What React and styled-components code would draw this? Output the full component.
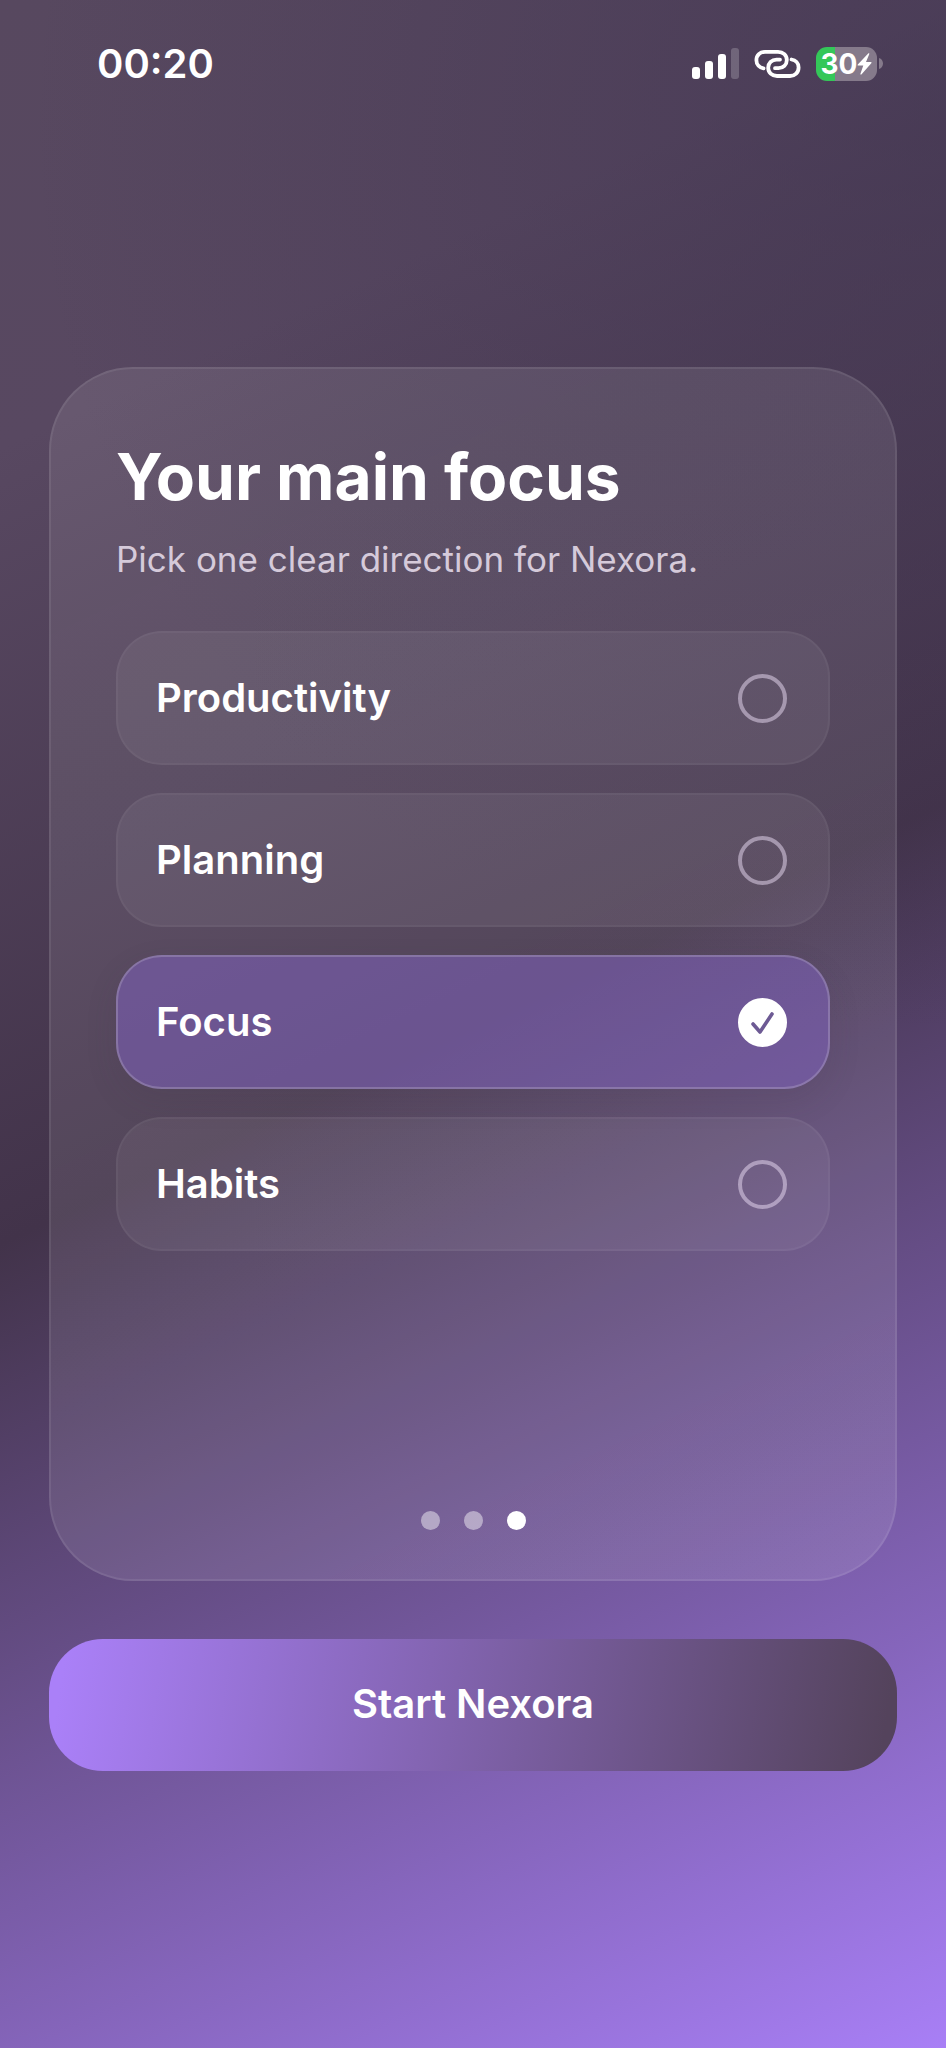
import React, { useState } from "react";
import styled, { createGlobalStyle } from "styled-components";

const GlobalStyle = createGlobalStyle`
    * {
        box-sizing: border-box;
    }

    body {
        margin: 0;
        font-family: Inter, "Liberation Sans", sans-serif;
        color: #fff;
        background: #42344a;
    }
`;

const Screen = styled.div`
    display: flex;
    flex-direction: column;
    min-height: 100vh;
    padding: 0 49px 277px;
    background:
        radial-gradient(circle at 100% 12%, rgba(64, 52, 80, 0.6), rgba(64, 52, 80, 0) 70%) no-repeat 0 0 / 100% 50%,
        linear-gradient(155deg, #57485f 0%, #584861 18%, #42334a 50%, #a87ff6 100%);
`;

const StatusBar = styled.header`
    display: flex;
    align-items: center;
    justify-content: space-between;
    height: 96px;
    margin-bottom: 271px;
    padding: 31px 14px 0 48px;
`;

const Time = styled.time`
    font-size: 40px;
    line-height: 48px;
    font-weight: 600;
`;

const StatusIcons = styled.div`
    display: flex;
    align-items: center;
    gap: 15px;
`;

const Battery = styled.div`
    display: flex;
    align-items: center;
    gap: 2px;
`;

const BatteryBody = styled.div`
    display: flex;
    align-items: center;
    justify-content: center;
    width: 61px;
    height: 34px;
    border-radius: 11px;
    font-size: 28px;
    line-height: 34px;
    font-weight: 700;
    background: linear-gradient(90deg, #34c759 19px, #857a8b 19px);
`;

const Card = styled.main`
    display: flex;
    flex: 1;
    flex-direction: column;
    padding: 70px 65px 49px;
    border: 2px solid rgba(255, 255, 255, 0.08);
    border-radius: 84px;
    background: linear-gradient(155deg, rgba(255, 255, 255, 0.09), rgba(255, 255, 255, 0.1)) border-box;
`;

const Title = styled.h1`
    margin: 0;
    font-size: 64px;
    line-height: 76px;
    font-weight: 700;
`;

const Subtitle = styled.p`
    margin: 20px 0 48px;
    font-size: 35px;
    line-height: 48px;
    color: #d5cada;
`;

const Options = styled.div`
    display: flex;
    flex-direction: column;
    gap: 28px;
`;

const Option = styled.label`
    display: flex;
    align-items: center;
    justify-content: space-between;
    height: 134px;
    padding: 0 41px 0 38px;
    border: 2px solid ${({ $active }) => ($active ? "rgba(255, 255, 255, 0.18)" : "rgba(255, 255, 255, 0.04)")};
    border-radius: 46px;
    background: ${({ $active }) => ($active ? "rgba(124, 94, 182, 0.58)" : "rgba(255, 255, 255, 0.06)")};
    box-shadow: ${({ $active }) => ($active ? "0 12px 32px rgba(66, 51, 74, 0.12)" : "none")};
    font-size: 40px;
    line-height: 48px;
    font-weight: 600;
    cursor: pointer;
`;

const RadioWrap = styled.span`
    display: grid;

    > * {
        grid-area: 1 / 1;
    }
`;

const Radio = styled.input`
    appearance: none;
    width: 49px;
    height: 49px;
    margin: 0;
    border: 4px solid rgba(235, 222, 245, 0.5);
    border-radius: 50%;

    &:checked {
        border-color: #fff;
        background: #fff;
    }
`;

const Dots = styled.div`
    display: flex;
    justify-content: center;
    gap: 24px;
    margin-top: auto;
`;

const Dot = styled.span`
    width: 19px;
    height: 19px;
    border-radius: 50%;
    background: ${({ $active }) => ($active ? "#fff" : "rgba(255, 255, 255, 0.45)")};
`;

const StartButton = styled.button`
    height: 132px;
    margin-top: 58px;
    padding: 0 0 2px;
    border: 0;
    border-radius: 54px;
    color: #fff;
    font-family: inherit;
    font-size: 40px;
    line-height: 48px;
    font-weight: 600;
    background: linear-gradient(98deg, #aa80f8 2%, #54435c 98%);
    cursor: pointer;
`;

const SignalIcon = () => (
    <svg width="47" height="31" viewBox="0 0 47 31" fill="#fff" aria-hidden="true">
        <rect x="0" y="19" width="8" height="12" rx="3" />
        <rect x="13" y="13" width="8" height="18" rx="3" />
        <rect x="26" y="6" width="8" height="25" rx="3" />
        <rect x="39" y="0" width="8" height="31" rx="3" opacity="0.2" />
    </svg>
);

// two interlocked capsules, each open where the other one crosses
const LinkIcon = () => (
    <svg
        width="47"
        height="28"
        viewBox="0 0 46 28"
        fill="none"
        stroke="#fff"
        strokeWidth="3.8"
        strokeLinecap="round"
        aria-hidden="true"
    >
        <path d="M9 18.3C5 17.6 1.9 14.8 1.9 10.3 1.9 5.3 5.6 1.9 10.5 1.9H23.5C28.7 1.9 32.3 5.3 32.3 10C32.3 14.8 28.7 18.2 24 18.2H20.5" />
        <path d="M37 9.5C41 10.2 44.1 13 44.1 17.5C44.1 22.5 40.4 26 35.5 26H22.5C17.3 26 13.7 22.5 13.7 17.8C13.7 13 17.3 9.6 22 9.6H25.5" />
    </svg>
);

const BoltIcon = () => (
    <svg width="15" height="22" viewBox="0 0 15 22" fill="#fff" aria-hidden="true">
        <path d="M11.2 0.5L0.8 11.4C0.3 12 0.6 12.6 1.3 12.6H6.3L3.5 20.6C3.2 21.6 3.9 22 4.6 21.3L14.3 10.3C14.8 9.7 14.5 9 13.8 9H9L12.2 1.3C12.6 0.4 11.9 0 11.2 0.5Z" />
    </svg>
);

const NubIcon = () => (
    <svg width="4" height="11" viewBox="0 0 4 11" fill="#857a8b" aria-hidden="true">
        <path d="M0 0C2.5 0.8 4 3 4 5.5S2.5 10.2 0 11Z" />
    </svg>
);

const CheckIcon = () => (
    <svg
        width="49"
        height="49"
        viewBox="0 0 49 49"
        fill="none"
        stroke="#6d5a94"
        strokeWidth="3.6"
        strokeLinecap="round"
        strokeLinejoin="round"
        aria-hidden="true"
    >
        <path d="M15 26L22 34L34 16" />
    </svg>
);

const options = ["Productivity", "Planning", "Focus", "Habits"];

export default function App() {
    const [focus, setFocus] = useState("Focus");

    return (
        <>
            <GlobalStyle />
            <Screen>
                <StatusBar>
                    <Time>00:20</Time>
                    <StatusIcons>
                        <SignalIcon />
                        <LinkIcon />
                        <Battery>
                            <BatteryBody>
                                30
                                <BoltIcon />
                            </BatteryBody>
                            <NubIcon />
                        </Battery>
                    </StatusIcons>
                </StatusBar>
                <Card>
                    <Title id="focus-title">Your main focus</Title>
                    <Subtitle>Pick one clear direction for Nexora.</Subtitle>
                    <Options role="radiogroup" aria-labelledby="focus-title">
                        {options.map((name) => (
                            <Option key={name} $active={name === focus}>
                                {name}
                                <RadioWrap>
                                    <Radio
                                        type="radio"
                                        name="focus"
                                        value={name}
                                        checked={name === focus}
                                        onChange={() => setFocus(name)}
                                    />
                                    {name === focus && <CheckIcon />}
                                </RadioWrap>
                            </Option>
                        ))}
                    </Options>
                    <Dots>
                        <Dot />
                        <Dot />
                        <Dot $active />
                    </Dots>
                </Card>
                <StartButton type="button">Start Nexora</StartButton>
            </Screen>
        </>
    );
}
